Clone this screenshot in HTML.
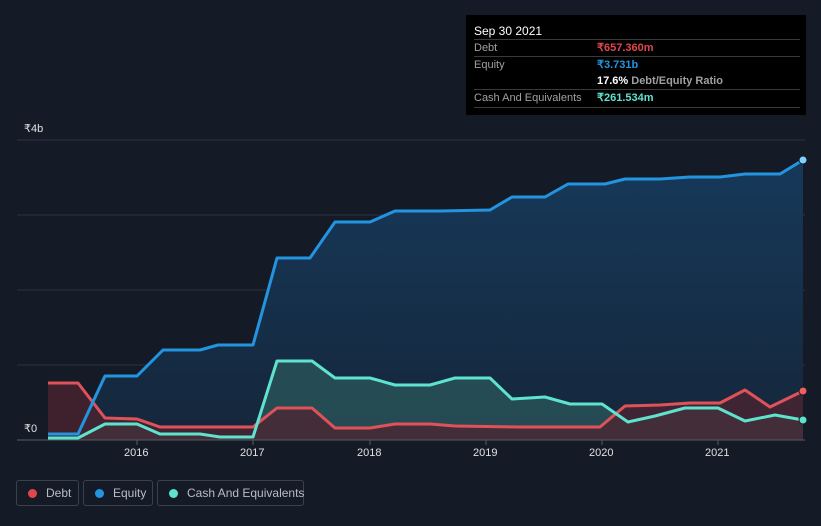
<!DOCTYPE html>
<html><head><style>
body{margin:0;background:#151b26;width:821px;height:526px;overflow:hidden;font-family:"Liberation Sans",sans-serif;position:relative}
.tt{position:absolute;left:466px;top:15px;width:340px;height:100px;background:#000;color:#fff;font-size:11px}
.tt .r{position:absolute;left:8px;right:6px;height:17px;border-top:1px solid #3a3a3a;color:#a0a0a0;line-height:17px}
.tt .v{position:absolute;left:123px;font-weight:bold}
.leg{position:absolute;top:480px;height:26px;border:1px solid #3a404c;border-radius:3px;color:#b8bcc4;font-size:12px;line-height:24px;box-sizing:border-box;white-space:nowrap}
.leg i{display:inline-block;width:9px;height:9px;border-radius:50%;margin:0 9px 0 11px;vertical-align:-1px}
.ax{position:absolute;color:#e0e0e0;font-size:11px}
</style></head><body>
<svg width="821" height="526" style="position:absolute;left:0;top:0">
<defs>
<linearGradient id="ge" x1="0" y1="0" x2="0" y2="1"><stop offset="0" stop-color="#16395a"/><stop offset="1" stop-color="#15263a"/></linearGradient>
</defs>
<g stroke="#2a3240" stroke-width="1">
<line x1="17" y1="140" x2="805" y2="140"/><line x1="17" y1="215" x2="805" y2="215"/><line x1="17" y1="290" x2="805" y2="290"/><line x1="17" y1="365" x2="805" y2="365"/>
</g>
<polygon fill="url(#ge)" points="48,440 48,434 78,434 105,376 137,376 163,350 200,350 218,345 253,345 277,258 310,258 335,222 370,222 395,211 440,211 490,210 512,197 545,197 568,184 605,184 625,179 660,179 690,177 720,177 745,174 780,174 803,160 803,440"/>
<polygon fill="#2c5a5c" fill-opacity=".7" points="48,440 48,438 78,438 105,424 137,424 160,434 200,434 220,437 253,437 277,361 312,361 335,378 370,378 395,385 430,385 455,378 490,378 512,399 545,397 570,404 602,404 628,422 655,416 685,408 718,408 745,421 775,415 803,420 803,440"/>
<polygon fill="#4e2430" fill-opacity=".75" points="48,440 48,383 78,383 105,418 137,419 160,427 253,427 277,408 312,408 335,428 370,428 395,424 430,424 455,426 520,427 600,427 625,406 660,405 690,403 720,403 745,390 770,407 803,391 803,440"/>
<line x1="17" y1="440" x2="805" y2="440" stroke="#555c66"/>
<g stroke="#555c66"><line x1="137" y1="440" x2="137" y2="445"/><line x1="253" y1="440" x2="253" y2="445"/><line x1="370" y1="440" x2="370" y2="445"/><line x1="486" y1="440" x2="486" y2="445"/><line x1="602" y1="440" x2="602" y2="445"/><line x1="718" y1="440" x2="718" y2="445"/></g>
<g fill="none" stroke-width="3" stroke-linejoin="round">
<polyline stroke="#e0525a" points="48,383 78,383 105,418 137,419 160,427 253,427 277,408 312,408 335,428 370,428 395,424 430,424 455,426 520,427 600,427 625,406 660,405 690,403 720,403 745,390 770,407 803,391"/>
<polyline stroke="#5ee3cf" points="48,438 78,438 105,424 137,424 160,434 200,434 220,437 253,437 277,361 312,361 335,378 370,378 395,385 430,385 455,378 490,378 512,399 545,397 570,404 602,404 628,422 655,416 685,408 718,408 745,421 775,415 803,420"/>
<polyline stroke="#2394e0" points="48,434 78,434 105,376 137,376 163,350 200,350 218,345 253,345 277,258 310,258 335,222 370,222 395,211 440,211 490,210 512,197 545,197 568,184 605,184 625,179 660,179 690,177 720,177 745,174 780,174 803,160"/>
</g>
<circle cx="803" cy="160" r="4" fill="#7fd0ff" stroke="#151b26"/>
<circle cx="803" cy="391" r="4" fill="#f06060" stroke="#151b26"/>
<circle cx="803" cy="420" r="4" fill="#5ee3cf" stroke="#151b26"/>
</svg>
<div class="ax" style="left:24px;top:122px">₹4b</div>
<div class="ax" style="left:24px;top:422px">₹0</div>
<div class="ax" style="left:124px;top:447px">2016</div>
<div class="ax" style="left:240px;top:447px">2017</div>
<div class="ax" style="left:357px;top:447px">2018</div>
<div class="ax" style="left:473px;top:447px">2019</div>
<div class="ax" style="left:589px;top:447px">2020</div>
<div class="ax" style="left:705px;top:447px">2021</div>
<div class="tt">
<div style="position:absolute;left:8px;top:9px;font-size:12px">Sep 30 2021</div>
<div class="r" style="top:24px">Debt<span class="v" style="color:#e0474c">₹657.360m</span></div>
<div class="r" style="top:41px">Equity<span class="v" style="color:#2394e0">₹3.731b</span></div>
<div class="r" style="top:58px;border-top:none"><span class="v" style="color:#fff">17.6% <span style="color:#a0a0a0">Debt/Equity Ratio</span></span></div>
<div class="r" style="top:74px;border-bottom:1px solid #3a3a3a">Cash And Equivalents<span class="v" style="color:#5ee3cf">₹261.534m</span></div>
</div>
<div class="leg" style="left:16px;width:63px"><i style="background:#e0474c"></i>Debt</div>
<div class="leg" style="left:83px;width:70px"><i style="background:#2394e0"></i>Equity</div>
<div class="leg" style="left:157px;width:147px"><i style="background:#5ee3cf"></i>Cash And Equivalents</div>
</body></html>
